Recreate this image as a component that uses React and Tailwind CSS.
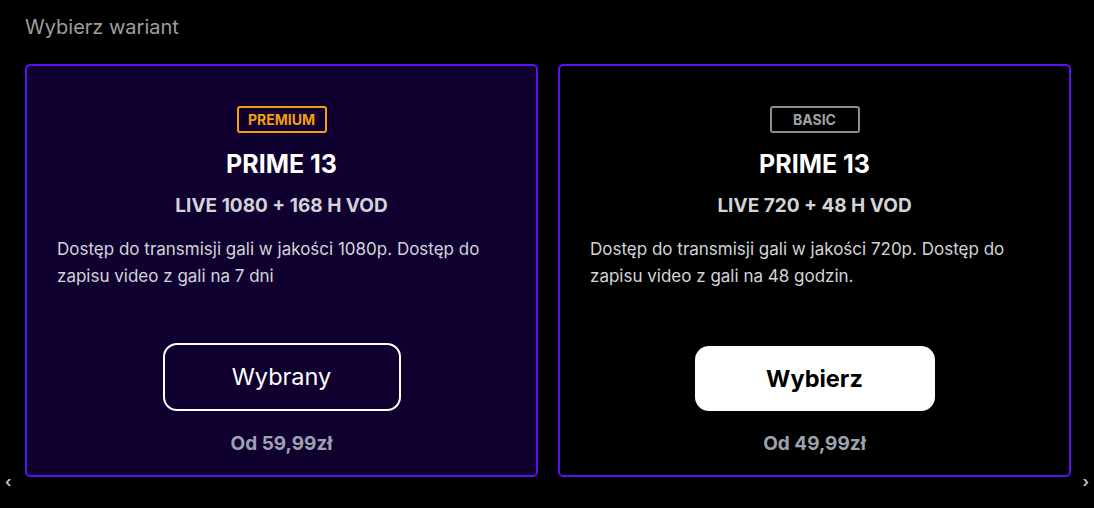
import React from "react";

const plans = [
  {
    badge: "PREMIUM",
    name: "PRIME 13",
    subtitle: "LIVE 1080 + 168 H VOD",
    desc: "Dostęp do transmisji gali w jakości 1080p. Dostęp do zapisu video z gali na 7 dni",
    price: "Od 59,99zł",
    selected: true,
  },
  {
    badge: "BASIC",
    name: "PRIME 13",
    subtitle: "LIVE 720 + 48 H VOD",
    desc: "Dostęp do transmisji gali w jakości 720p. Dostęp do zapisu video z gali na 48 godzin.",
    price: "Od 49,99zł",
    selected: false,
  },
];

function PlanCard({ plan }) {
  return (
    <div
      className={
        "flex flex-col items-center rounded-[5px] border-2 border-[#5b12f2] pt-10 pb-[18px] px-[30px] " +
        (plan.selected ? "bg-[#10002f]" : "bg-black")
      }
    >
      {plan.selected ? (
        <span className="h-[27px] w-[90px] flex items-center justify-center rounded-[3px] border-2 border-[#f59e0b] text-[14px] font-bold text-[#f59e0b]">
          {plan.badge}
        </span>
      ) : (
        <span className="h-[27px] w-[90px] flex items-center justify-center rounded-[3px] border-2 border-[#8c8c8c] text-[14px] font-bold text-[#a3a3a3]">
          {plan.badge}
        </span>
      )}
      <h3 className="mt-[15px] text-[25px] leading-8 font-bold text-white">{plan.name}</h3>
      <p className="mt-3 text-[19px] leading-7 font-bold text-[#d4d4d8]">{plan.subtitle}</p>
      <p className="mt-4 self-stretch text-[17px] leading-[27px] text-[#d4d4d8]">{plan.desc}</p>
      {plan.selected ? (
        <button className="mt-auto h-[68px] w-[238px] rounded-[14px] border-2 border-white text-[23.5px] text-white">
          Wybrany
        </button>
      ) : (
        <button className="mt-auto h-[65px] w-[240px] rounded-[14px] bg-white text-[23.5px] font-bold text-black">
          Wybierz
        </button>
      )}
      <p className="mt-5 text-[19px] leading-[26px] font-bold text-[#9ca3af]">{plan.price}</p>
    </div>
  );
}

export default function App() {
  return (
    <div
      className="relative h-[508px] w-full bg-black pl-[25px] pr-[23px] pt-[14px]"
      style={{ fontFamily: "Inter, 'Noto Sans', sans-serif" }}
    >
      <h2 className="text-[20px] leading-[26px] text-[#9e9e9e]">Wybierz wariant</h2>
      <div className="mt-6 grid h-[413px] grid-cols-2 gap-5">
        {plans.map((p, i) => (
          <PlanCard key={i} plan={p} />
        ))}
      </div>
      <span className="absolute left-[5px] top-[471px] text-[15px] font-bold text-[#bdbdbd]">‹</span>
      <span className="absolute right-[5px] top-[471px] text-[15px] font-bold text-[#bdbdbd]">›</span>
    </div>
  );
}
